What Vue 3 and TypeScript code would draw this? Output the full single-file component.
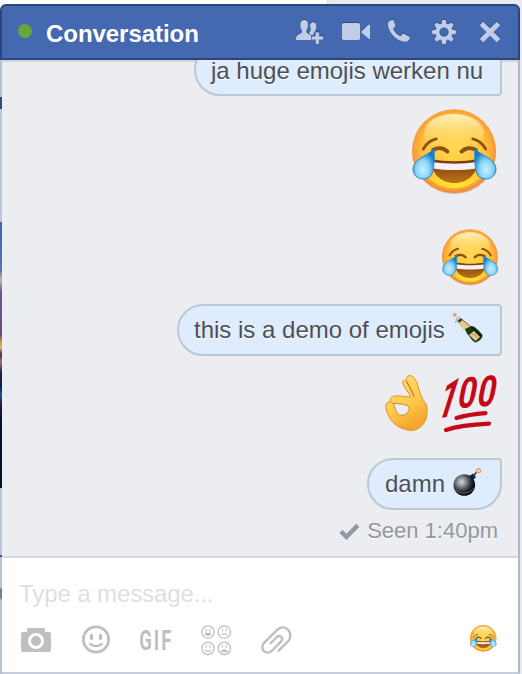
<script setup lang="ts">
import { h, type FunctionalComponent } from 'vue'

const contact = 'Conversation'
const gearTeeth = [0, 45, 90, 135, 180, 225, 270, 315]

const JoyFace: FunctionalComponent<{ size: number }> = (props) =>
  h('svg', { width: props.size, height: props.size, viewBox: '0 0 86 86', role: 'img' }, [h('use', { href: '#joy' })])
JoyFace.props = ['size']
</script>

<template>
  <div class="page">
    <svg class="defs" width="0" height="0" aria-hidden="true">
      <defs>
        <radialGradient id="skin" cx=".5" cy=".48" r=".54">
          <stop offset="0" stop-color="#ffd650" />
          <stop offset=".68" stop-color="#ffc23e" />
          <stop offset=".86" stop-color="#fba437" />
          <stop offset="1" stop-color="#ea7d35" />
        </radialGradient>
        <linearGradient id="shine" x1="0" y1="0" x2="0" y2="1">
          <stop offset="0" stop-color="#fff3c5" stop-opacity=".95" />
          <stop offset="1" stop-color="#ffe060" stop-opacity="0" />
        </linearGradient>
        <linearGradient id="chin" x1="0" y1="0" x2="0" y2="1">
          <stop offset=".72" stop-color="#ffe32d" stop-opacity="0" />
          <stop offset=".95" stop-color="#ffe62d" stop-opacity=".9" />
        </linearGradient>
        <linearGradient id="mouth" x1="0" y1="0" x2="0" y2="1">
          <stop offset="0" stop-color="#75350e" />
          <stop offset=".6" stop-color="#a35b12" />
          <stop offset="1" stop-color="#bd7415" />
        </linearGradient>
        <radialGradient id="tear" cx=".46" cy=".68" r=".62">
          <stop offset="0" stop-color="#c5efff" />
          <stop offset=".5" stop-color="#8bd5fa" />
          <stop offset="1" stop-color="#0f7fcc" />
        </radialGradient>
        <g id="joy">
          <circle cx="42.5" cy="43.6" r="41.5" fill="#8b7760" opacity=".35" />
          <circle cx="42" cy="42.2" r="42" fill="url(#skin)" />
          <circle cx="42" cy="42.2" r="37" fill="url(#chin)" />
          <ellipse cx="42" cy="24" rx="30" ry="19" fill="url(#shine)" />
          <g fill="none" stroke="#8a520e" stroke-linecap="round">
            <path d="M11.3 40C14 35 18.5 31 24.3 29.8M73.7 40C71 35 66.5 31 60.7 29.8" stroke-width="2.8" />
            <path d="M21 41C26 38 32 38.8 35.5 42.6M64 41C59 38 53 38.8 49.5 42.6" stroke-width="3.8" />
          </g>
          <path d="M19.5 50C33 53 52 53 65.5 50C67 64 56 74 42.5 74S18 64 19.5 50Z" fill="url(#mouth)" />
          <path d="M20.5 53C34 55.3 51 55.3 64.5 53L63.5 59.5C51 61.5 34 61.5 21.5 59.5Z" fill="#f6f1f5" />
          <path id="drop" d="M22.3 40.3C22 49 22.8 61 19 66.5C14.8 71.5 6 71 2.5 65.5C-1 59 2 54 8 49.5C13 46 18.5 43.5 22.3 40.3Z" fill="url(#tear)" stroke="#2289cd" stroke-width="1" />
          <use href="#drop" transform="matrix(-1 0 0 1 85 0)" />
        </g>
      </defs>
    </svg>
    <div class="edge"></div>
    <section class="chat">
      <header class="bar">
        <i class="online"></i>
        <h1>{{ contact }}</h1>
        <nav>
          <svg viewBox="0 0 28 28">
            <path d="M17.2 4.2C20 4.2 20.6 7 20.2 10C19.8 12 19 12.8 19 14.5H17.5V17H14.7L13 14.8C15.5 13 15 10 14 8C14.2 5.4 15.3 4.2 17.2 4.2Z" />
            <path d="M8.2 2C11.1 2 12.2 4.2 11.9 7.2C11.7 9.8 10.8 11.3 10.3 12.5C10.1 14.7 11 15.2 13.2 16.3C15.2 17.2 15.8 18.5 15.8 22H0C0 18.5 .7 17.2 3 16.2C5.3 15.2 6.2 14.7 6 12.5C5.2 11.2 4.5 9.8 4.4 7.2C4.2 4.2 5.4 2 8.2 2Z" />
            <path class="cut" d="M18.6 13.7H24V17.4H28V22.7H24V27H18.6V22.7H15V17.4H18.6Z" />
            <path d="M19.7 14.5H22.9V18.4H27V21.6H22.9V25.7H19.7V21.6H15.8V18.4H19.7Z" />
          </svg>
          <svg viewBox="0 0 28 28">
            <rect x="1" y="5" width="18" height="17" rx="1.8" />
            <path d="M20.7 13.3L27.3 6.8Q29 6 29 7V20.5Q28.8 21.5 27.5 20.6L20.7 14.8Z" />
          </svg>
          <svg viewBox="0 0 28 28">
            <path d="M3.4 3.1L6 2C7 1.8 7.6 2.2 8 3.1L9.2 7.3C9.4 8.2 9.1 8.8 8.4 9.3L7.1 10.4C8.2 13.9 11.2 16.9 14.6 18.3L16 16.6C16.6 15.8 17.4 15.7 18.2 16.1L22.5 18.2C23.8 18.9 24.1 19.6 23.6 20.7C22.5 23 20.4 24 17.7 23.6C9.6 22.3 2.2 13.8 2 6.3C2 4.7 2.4 3.7 3.4 3.1Z" />
          </svg>
          <svg viewBox="0 0 28 28">
            <g transform="translate(13 14)">
              <path v-for="angle in gearTeeth" :key="angle" d="M-2.8 -7L-1.6 -12H1.6L2.8 -7Z" :transform="`rotate(${angle})`" />
              <circle r="6.5" class="ring" />
            </g>
          </svg>
          <svg viewBox="0 0 28 28"><path class="cross" d="M5.5 5.5L22.5 22.5M22.5 5.5L5.5 22.5" /></svg>
        </nav>
      </header>

      <main>
        <div class="bubble first">ja huge emojis werken nu</div>
        <JoyFace class="huge" :size="86" />
        <JoyFace class="large" :size="57" />
        <div class="bubble demo">
          <span>this is a demo of emojis</span>
          <svg class="bottle" width="32" height="32" viewBox="0 0 32 32">
            <path d="M6 10L10 6.5L19 14L12.5 18Z" fill="#e4c894" />
            <path d="M10 6.5L20.5 15" stroke="#8b642d" />
            <path d="M13 16L19.5 13C23 13.5 26 16.5 30.5 22Q31 26 24 29.5Q21 29 17 23Q14 20 13 16Z" fill="#183c15" />
            <path d="M20 14.5L29 23" stroke="#09230b" stroke-width="2" />
            <path d="M17 22L22 18L28 24L23.5 28Z" fill="#e8c78d" />
            <path d="M20 22L23 21L25 25" fill="none" stroke="#c39655" />
            <path d="M5.5 7.5L9 5L10.5 7L7 10Z" fill="#34411c" />
            <path d="M4 9L5 5L8 4M3 10L6 8" fill="none" stroke="#b5bac1" stroke-width="1.5" />
            <path d="M.5 1L3 0L5 2L2.5 4Z" fill="#ee9654" />
          </svg>
        </div>
        <div class="pair">
          <svg width="44" height="59" viewBox="0 0 44 59">
            <defs>
              <linearGradient id="hand" x1="0" y1="0" x2=".4" y2="1">
                <stop offset="0" stop-color="#ffdf6b" />
                <stop offset=".6" stop-color="#ffcb4c" />
                <stop offset="1" stop-color="#f4a72f" />
              </linearGradient>
            </defs>
            <path class="hand" d="M21.5 6.5C21 2.5 22.5 .6 25 .6C29.5 .8 31.5 6.5 33 11.5C34.5 16 35.5 19.5 37.5 23.5C40 28 42.3 30 42.2 34.5C42 41 41.5 45.5 37.5 50C33 55 27.5 56.3 22.5 55C14.5 53.5 8.5 49 5 43.5C2.5 39 .8 35 .8 31C.8 27.5 4 25.8 6.5 27.3C4.5 25.5 5 22.2 8.5 21.2C13 20.3 19 21.5 25.5 22.2C24.5 17.5 18.5 12.5 17.7 8.3C17.5 5 20 4.3 21.5 6.5Z" />
            <path class="gap" d="M7.5 28.2C9.8 30.5 10 34 11.5 36.7C13.5 40.8 17.5 41.2 20.5 39C23.5 36.8 25.3 34.5 23.5 31.7C21.5 29.3 14.5 28.7 7.5 28.2Z" />
            <path d="M21.5 6.5C24.5 12 28 17 29 22" fill="none" stroke="#c97b26" stroke-width="1.2" />
          </svg>
          <svg class="hundred" width="55" height="59" viewBox="0 0 55 59">
            <g class="digits">
              <text transform="matrix(.75 -.12 -.4 1.27 -9 44)">1</text>
              <text transform="matrix(.74 -.03 -.2 1 13 33)">0</text>
              <text transform="matrix(.74 -.03 -.2 1 32.5 31.5)">0</text>
            </g>
            <path d="M13.5 43C22 40.5 32 39 42.5 38.2M3 55C15 51 29 49.5 46 48.7" fill="none" stroke="#c40a19" stroke-width="4.2" stroke-linecap="round" />
          </svg>
        </div>
        <div class="bubble last">
          <span>damn</span>
          <svg class="bomb" width="30" height="30" viewBox="0 0 30 30">
            <defs>
              <radialGradient id="ball" cx=".37" cy=".36" r=".6">
                <stop offset="0" stop-color="#d8dbe3" />
                <stop offset=".35" stop-color="#858993" />
                <stop offset=".75" stop-color="#292b32" />
                <stop offset="1" stop-color="#08090c" />
              </radialGradient>
            </defs>
            <path d="M16.5 8L20 5.5L23 9L20 12Z" fill="#17191e" />
            <circle cx="11.3" cy="17" r="10.8" fill="url(#ball)" />
            <path d="M2.3 21C6 26.5 16 27 21 19.7" fill="none" stroke="#60646d" />
            <path d="M20 8.5L24.5 3" stroke="#3a3c42" stroke-width="1.8" />
            <circle cx="25.5" cy="2.8" r="2" fill="#ffe9d2" stroke="#ee9a70" stroke-width="1.4" />
          </svg>
        </div>
        <div class="seen">
          <svg width="21" height="17" viewBox="0 0 21 17"><path d="M2 8.5L7.4 13.8L18.8 2.3" /></svg>
          <span>Seen 1:40pm</span>
        </div>
      </main>

      <footer>
        <div class="input">Type a message...</div>
        <div class="tools">
          <svg viewBox="0 0 30 30">
            <path class="solid" fill-rule="evenodd" d="M7.5 3H23Q24 3 24 4V7H28Q30 7 30 9V25Q30 27 28 27H2Q0 27 0 25V9Q0 7 2 7H6V4.5Q6 3 7.5 3ZM15 8A8 8 0 1 0 15 24A8 8 0 1 0 15 8Z" />
            <circle class="solid" cx="15" cy="16" r="5" />
          </svg>
          <svg viewBox="0 0 30 30">
            <circle class="line" cx="15" cy="14.5" r="12.6" stroke-width="2.8" />
            <ellipse class="solid" cx="10.5" cy="12" rx="1.7" ry="3.2" />
            <ellipse class="solid" cx="19.5" cy="12" rx="1.7" ry="3.2" />
            <path class="line" d="M8.5 18.2C12 22 18 22 21.5 18.2" stroke-width="2.2" />
          </svg>
          <svg viewBox="0 0 30 30"><text class="gif" transform="translate(-1.8 25) scale(.66 1)">GIF</text></svg>
          <svg viewBox="0 0 30 30">
            <g v-for="(c, i) in [[7, 7], [23.3, 7], [7, 23.3], [23.3, 23.3]]" :key="i" :transform="`translate(${c[0]} ${c[1]})`">
              <circle class="line" r="6.2" stroke-width="1.3" />
              <path class="line" d="M-2 -3.2V-.6M2 -3.2V-.6" stroke-width="1.1" />
              <path v-if="i === 0" class="solid" d="M-3.6 .8H3.6C3 5 -3 5 -3.6 .8Z" />
              <path v-else-if="i === 1" class="line" d="M-2.8 3.2Q0 .4 2.8 3.2" stroke-width="1.1" />
              <path v-else-if="i === 2" class="line" d="M-3 1.7Q0 4.8 3 1.7" stroke-width="1.1" />
              <path v-else class="solid" d="M-3.6 4C-3 0 3 0 3.6 4Z" />
            </g>
          </svg>
          <svg viewBox="0 0 30 30">
            <path class="line" d="M16.9 26.4L27.2 16.2C30.5 12.5 29.6 7.5 27.2 4.9C24 1.7 19.8 1.8 16.5 4.7L3.3 17.6C.6 20.4 .7 24 2.9 26.1C5.2 28.3 8.6 28 11.2 25.5L20 16.6C21.6 14.8 21.5 13 20.4 12C19.2 10.7 17.2 10.7 15.8 12L9 19" stroke-width="2.4" />
          </svg>
          <JoyFace class="quick" :size="27" />
        </div>
      </footer>
    </section>
  </div>
</template>

<style>
body {
  overflow: hidden;
}
</style>

<style scoped>
.page {
  box-sizing: border-box;
  display: flex;
  width: 522px;
  height: 674px;
  padding-top: 4px;
  background: linear-gradient(90deg, #fff 327px, #dfe1e6 327px, #dfe1e6 329px, #e9eaee 329px);
  font-family: 'Liberation Sans', Arial, sans-serif;
  font-size: 24px;
}
.defs {
  position: absolute;
}
.edge {
  width: 2px;
  margin-top: 56px;
  background: linear-gradient(#b8c0d2 37px, #2c4a84 37px, #2c4a84 49px, #bdc5d7 49px, #bdc5d7 162px, #3d66ab 162px, #5476ae 210px, #c4b6ae 220px, #74508c 232px, #70509a 250px, #704b70 275px, #c49c52 282px, #dab75b 288px, #35354f 294px, #a57356 302px, #172443 313px, #09253f 326px, #195995 335px, #251a43 344px, #061235 360px, #071128 428px, #bdc4d4 428px, #bdc4d4 495px, #345590 495px, #345590 497px, #b9c1d3 497px, #b9c1d3 528px, #777f91 529px, #777f91 538px, #b9c1d3 540px);
}
.chat {
  box-sizing: border-box;
  width: 518px;
  height: 670px;
  border-right: 2px solid #aeb8cc;
  border-bottom: 2px solid #c5ccda;
  border-top-right-radius: 6px;
}
.bar {
  box-sizing: border-box;
  display: flex;
  align-items: center;
  width: 520px;
  height: 56px;
  margin-left: -2px;
  padding: 0 14px 0 16px;
  border: 2px solid #2a477d;
  border-radius: 6px 6px 0 0;
  background: #4469b0;
}
.online {
  width: 14px;
  height: 14px;
  margin-top: -2px;
  border-radius: 50%;
  background: #67a73a;
}
h1 {
  margin: 3px 0 0 14px;
  color: #fff;
  font-size: 24px;
  line-height: 28px;
  letter-spacing: -.05px;
}
nav {
  display: flex;
  gap: 17px;
  margin-left: auto;
}
nav svg {
  width: 28px;
  height: 28px;
  overflow: visible;
  fill: #c1cde6;
  filter: drop-shadow(0 -1px 0 #2d4b87);
}
.cut {
  fill: #4469b0;
}
.ring {
  fill: none;
  stroke: #c1cde6;
  stroke-width: 3.8;
}
.cross {
  stroke: #c1cde6;
  stroke-width: 5;
}
main {
  box-sizing: border-box;
  display: flex;
  flex-direction: column;
  align-items: flex-end;
  width: 516px;
  height: 498px;
  padding-right: 16px;
  overflow: hidden;
  border-bottom: 2px solid #d5d7dc;
  background: linear-gradient(#d2d5de 2px, #ecedf1 2px);
}
main > * {
  flex: none;
}
.bubble {
  box-sizing: border-box;
  display: flex;
  align-items: center;
  height: 52px;
  padding-left: 15px;
  border: 2px solid #bac7d8;
  border-radius: 26px 4px 4px 26px;
  background: #dfecfe;
  color: #4b4f56;
  text-shadow: 0 1px 0 #fff;
  white-space: nowrap;
}
.first {
  width: 308px;
  margin-top: -16px;
  padding-top: 1px;
}
.huge {
  margin: 13px 4px 0 0;
}
.large {
  margin: 34px 3px 0 0;
}
.demo {
  width: 325px;
  margin-top: 18px;
}
.bottle {
  margin: -2px 0 0 7px;
}
.pair {
  display: flex;
  gap: 14px;
  margin: 19px 4px 0 0;
}
.hand {
  fill: url(#hand);
  stroke: #d99331;
  stroke-width: 1;
}
.gap {
  fill: #ecedf1;
  stroke: #cd8529;
  stroke-width: 1;
}
.hundred {
  overflow: visible;
}
.digits {
  fill: #c40a19;
  font: bold 43px Roboto, sans-serif;
}
.last {
  width: 135px;
  margin-top: 24px;
  padding-left: 16px;
  border-radius: 26px 4px 26px 26px;
}
.bomb {
  margin: -3px 0 0 8px;
}
.seen {
  display: flex;
  align-items: center;
  gap: 7px;
  margin: 8px 4px 0 0;
  color: #9197a0;
  font-size: 22px;
  line-height: 26px;
  text-shadow: 0 1px 0 #fff;
}
.seen svg {
  margin-top: 1px;
}
.seen path {
  fill: none;
  stroke: #9298a1;
  stroke-width: 4.5;
}
footer {
  box-sizing: border-box;
  width: 516px;
  height: 114px;
  padding: 22px 21px 0 17px;
  background: #fff;
}
.input {
  height: 45px;
  color: #dcdfe6;
  line-height: 28px;
  letter-spacing: -.1px;
}
.tools {
  display: flex;
  gap: 30px;
  height: 30px;
  padding-left: 2px;
}
.tools > svg:not(.quick) {
  width: 30px;
  height: 30px;
  overflow: visible;
}
.solid {
  fill: #bfbfbf;
}
.line {
  fill: none;
  stroke: #bfbfbf;
}
.gif {
  fill: #bfbfbf;
  font: bold 28px Roboto, sans-serif;
  letter-spacing: 3px;
}
.quick {
  margin-left: auto;
}
</style>
